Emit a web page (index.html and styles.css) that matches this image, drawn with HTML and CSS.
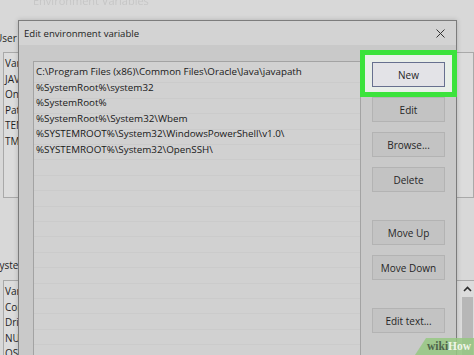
FILE: index.html
```html
<!DOCTYPE html>
<html>
<head>
<meta charset="utf-8">
<link rel="stylesheet" href="styles.css">
</head>
<body>
<div class="desk">
  <div class="parent">
    <div class="ptitle">Environment Variables</div>
    <div class="plabel">User variables for user</div>
    <div class="plist">
      <div class="prow">Variable</div>
      <div class="prow">JAVA_HOME</div>
      <div class="prow">OneDrive</div>
      <div class="prow">Path</div>
      <div class="prow">TEMP</div>
      <div class="prow">TMP</div>
    </div>
    <div class="plabel sys">System variables</div>
    <div class="plist plist-sys">
      <div class="prows">
        <div class="prow">Variable</div>
        <div class="prow">ComSpec</div>
        <div class="prow">DriverData</div>
        <div class="prow">NUMBER_OF_PROCESSORS</div>
        <div class="prow">OS</div>
      </div>
      <div class="scroll">
        <svg class="sarrow" width="9" height="6" viewBox="0 0 9 6"><path d="M1 5 L4.5 1.5 L8 5" stroke="#2e2e2e" stroke-width="1.6" fill="none"/></svg>
        <div class="sthumb"></div>
      </div>
    </div>
  </div>

  <div class="dialog">
    <div class="dtitle">
      <span>Edit environment variable</span>
      <svg class="close" width="9" height="9" viewBox="0 0 9 9"><path d="M0.5 0.5 L8.5 8.5 M8.5 0.5 L0.5 8.5" stroke="#333" stroke-width="1" fill="none"/></svg>
    </div>
    <div class="dbody">
      <div class="list">
        <div class="row">C:\Program Files (x86)\Common Files\Oracle\Java\javapath</div>
        <div class="row">%SystemRoot%\system32</div>
        <div class="row">%SystemRoot%</div>
        <div class="row">%SystemRoot%\System32\Wbem</div>
        <div class="row">%SYSTEMROOT%\System32\WindowsPowerShell\v1.0\</div>
        <div class="row">%SYSTEMROOT%\System32\OpenSSH\</div>
      </div>
      <div class="btns">
        <div class="hl"><div class="btn btn-new">New</div></div>
        <div class="btn">Edit</div>
        <div class="btn">Browse...</div>
        <div class="btn">Delete</div>
        <div class="btn grp">Move Up</div>
        <div class="btn">Move Down</div>
        <div class="btn grp">Edit text...</div>
      </div>
    </div>
  </div>

  <div class="wikihow"><span class="wk">wiki</span><span class="hw">How</span></div>
</div>
</body>
</html>
```

FILE: styles.css
```css
* { box-sizing: border-box; }
html, body { margin: 0; padding: 0; }
body {
  width: 474px;
  height: 355px;
  overflow: hidden;
  background: #d8d8d8;
  font-family: "Open Sans", "Noto Sans", sans-serif;
  font-size: 10px;
  color: #1f1f1f;
}
.desk {
  position: relative;
  width: 474px;
  height: 355px;
  overflow: hidden;
}
.parent {
  display: flex;
  flex-direction: column;
  padding: 0 0 0 3px;
}
.ptitle {
  margin-top: -9px;
  height: 20px;
  padding-left: 30px;
  color: #c6c6c6;
  font-size: 11px;
  line-height: 20px;
  filter: blur(0.7px);
}
.plabel {
  height: 41px;
  padding-top: 20px;
  line-height: 14px;
  margin-left: -8px;
  white-space: nowrap;
}
.plabel.sys { height: 82px; padding-top: 60px; margin-left: -9px; }
.plist {
  height: 146px;
  border: 1px solid #a9a9a9;
  background: #dcdcdc;
  padding: 3px 0 0 1px;
}
.prow { line-height: 15.6px; height: 15.6px; white-space: nowrap; }
.plist-sys {
  height: 120px;
  display: flex;
  padding: 0 0 0 1px;
  border-right: none;
}
.prows { flex: 1; padding-top: 3px; }
.scroll {
  width: 14px;
  display: flex;
  flex-direction: column;
  align-items: center;
}
.sarrow { margin-top: 5px; height: 6px; flex: none; }
.sthumb { width: 11px; flex: 1; background: #b7b7b7; margin-top: 5px; }

.dialog {
  position: absolute;
  left: 18px;
  top: 20px;
  width: 439px;
  height: 345px;
  border: 1px solid #7c7c7c;
  background: #c9c9c9;
  display: flex;
  flex-direction: column;
  box-shadow: 0 0 5px rgba(0,0,0,0.18);
}
.dtitle {
  height: 24px;
  flex: none;
  display: flex;
  align-items: center;
  justify-content: space-between;
  padding: 0 11px 0 5px;
  background: #d3d3d3;
  font-size: 9.6px;
  color: #1e1e1e;
}
.dbody {
  flex: 1;
  display: flex;
  gap: 11px;
  padding: 16px 11px 0 14px;
}
.list {
  flex: 1;
  border: 1px solid #a3a3a3;
  border-bottom: none;
  padding: 2px 0 0 2px;
  background-color: #d1d1d1;
  background-image: repeating-linear-gradient(to bottom, transparent 0, transparent 14.4px, #cbcbcb 14.4px, #cbcbcb 15.4px);
  background-position: 0 6px;
  font-size: 9.8px;
}
.row { height: 15.5px; line-height: 15.5px; white-space: nowrap; color: #181818; }
.btns {
  width: 73px;
  flex: none;
  display: flex;
  flex-direction: column;
  padding-top: 1px;
}
.btn {
  height: 25px;
  flex: none;
  margin-bottom: 10px;
  border: 1px solid #b3b3b3;
  background: #c3c3c3;
  display: flex;
  align-items: center;
  justify-content: center;
  color: #262626;
  font-size: 10px;
}
.btn.grp { margin-top: 18px; }
.hl {
  margin: -12px -12px 0 -12px;
  padding: 7px 7px 5px 7px;
  border: 5px solid #3be33b;
  background: #e9efe9;
  position: relative;
  z-index: 1;
  flex: none;
}
.btn-new {
  margin-bottom: 0;
  background: #e3e3e7;
  border: 1.5px solid #67708f;
}

.wikihow {
  position: absolute;
  right: 0;
  bottom: 0;
  width: 59px;
  height: 17px;
  background: rgba(150, 200, 130, 0.85);
  clip-path: polygon(11px 0, 100% 0, 100% 100%, 0 100%);
  font-family: "Liberation Serif", "Times New Roman", serif;
  font-weight: bold;
  font-size: 11.5px;
  line-height: 17px;
  padding-left: 12px;
  white-space: nowrap;
}
.wk { color: #4e654b; }
.hw { color: #eef5e8; }
```
